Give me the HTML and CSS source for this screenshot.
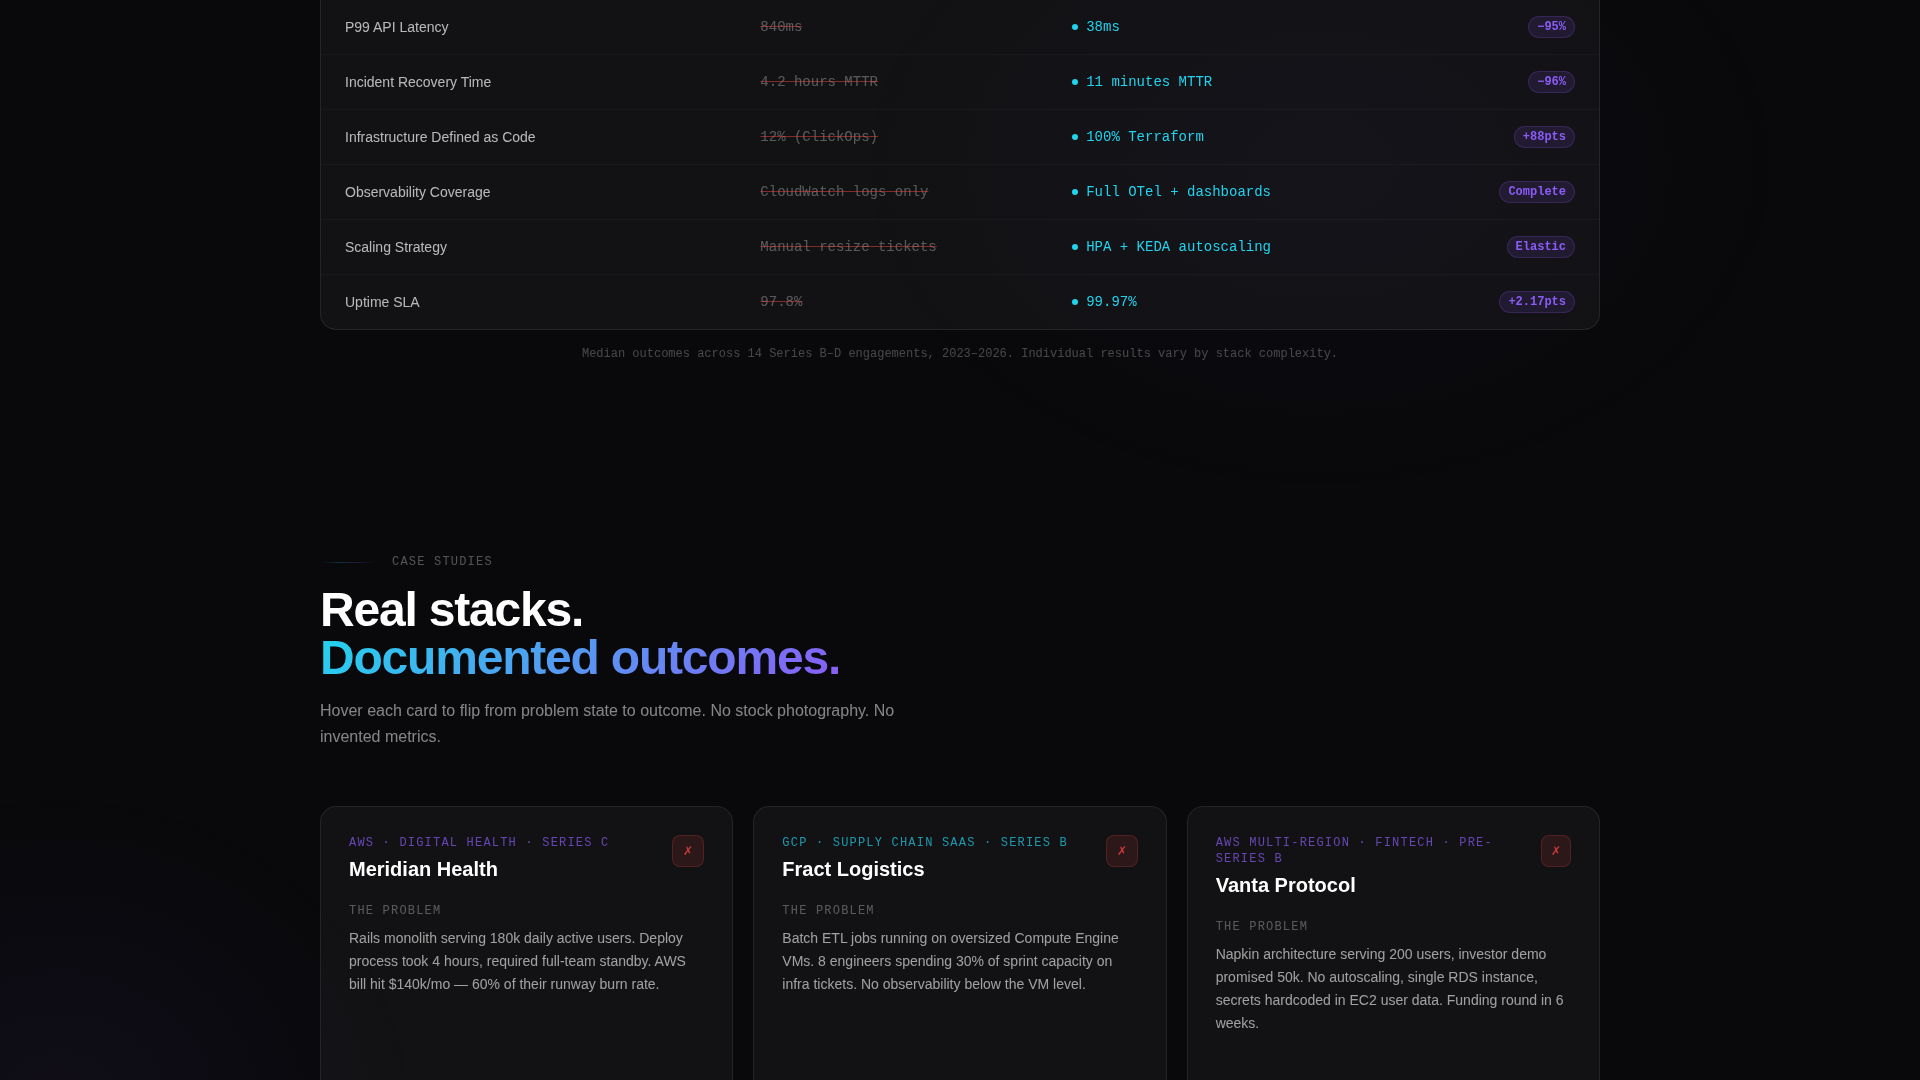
FILE: index.html
```html
<!DOCTYPE html>
<html lang="en">
<head>
    <meta charset="UTF-8">
    <meta name="viewport" content="width=device-width, initial-scale=1.0">
    <title>Case Studies</title>
    <link rel="stylesheet" href="styles.css">
</head>
<body>
    <div class="glow glow-top"></div>
    <div class="glow glow-bottom"></div>

    <main class="container">
        <section class="results">
            <div class="table-card">
                <table>
                    <colgroup>
                        <col class="col-metric">
                        <col class="col-before">
                        <col class="col-after">
                        <col class="col-delta">
                    </colgroup>
                    <tbody>
                        <tr>
                            <th scope="row">P99 API Latency</th>
                            <td class="before">840ms</td>
                            <td class="after"><span>38ms</span></td>
                            <td class="delta"><span class="badge">−95%</span></td>
                        </tr>
                        <tr>
                            <th scope="row">Incident Recovery Time</th>
                            <td class="before">4.2 hours MTTR</td>
                            <td class="after"><span>11 minutes MTTR</span></td>
                            <td class="delta"><span class="badge">−96%</span></td>
                        </tr>
                        <tr>
                            <th scope="row">Infrastructure Defined as Code</th>
                            <td class="before">12% (ClickOps)</td>
                            <td class="after"><span>100% Terraform</span></td>
                            <td class="delta"><span class="badge">+88pts</span></td>
                        </tr>
                        <tr>
                            <th scope="row">Observability Coverage</th>
                            <td class="before">CloudWatch logs only</td>
                            <td class="after"><span>Full OTel + dashboards</span></td>
                            <td class="delta"><span class="badge">Complete</span></td>
                        </tr>
                        <tr>
                            <th scope="row">Scaling Strategy</th>
                            <td class="before">Manual resize tickets</td>
                            <td class="after"><span>HPA + KEDA autoscaling</span></td>
                            <td class="delta"><span class="badge">Elastic</span></td>
                        </tr>
                        <tr>
                            <th scope="row">Uptime SLA</th>
                            <td class="before">97.8%</td>
                            <td class="after"><span>99.97%</span></td>
                            <td class="delta"><span class="badge">+2.17pts</span></td>
                        </tr>
                    </tbody>
                </table>
            </div>
            <p class="footnote">Median outcomes across 14 Series B–D engagements, 2023–2026. Individual results vary by stack complexity.</p>
        </section>

        <section class="cases">
            <div class="eyebrow">Case Studies</div>
            <h2>Real stacks.<br><span class="gradient">Documented outcomes.</span></h2>
            <p class="intro">Hover each card to flip from problem state to outcome. No stock photography. No invented metrics.</p>

            <div class="cards">
                <article class="card">
                    <header class="card-head">
                        <div>
                            <p class="label violet">AWS · Digital Health · Series C</p>
                            <h3>Meridian Health</h3>
                        </div>
                        <div class="mark">✗</div>
                    </header>
                    <p class="label">The Problem</p>
                    <p class="problem">Rails monolith serving 180k daily active users. Deploy process took 4 hours, required full-team standby. AWS bill hit $140k/mo — 60% of their runway burn rate.</p>
                </article>

                <article class="card">
                    <header class="card-head">
                        <div>
                            <p class="label cyan">GCP · Supply Chain SaaS · Series B</p>
                            <h3>Fract Logistics</h3>
                        </div>
                        <div class="mark">✗</div>
                    </header>
                    <p class="label">The Problem</p>
                    <p class="problem">Batch ETL jobs running on oversized Compute Engine VMs. 8 engineers spending 30% of sprint capacity on infra tickets. No observability below the VM level.</p>
                </article>

                <article class="card">
                    <header class="card-head">
                        <div>
                            <p class="label violet">AWS Multi-Region · Fintech · Pre-Series B</p>
                            <h3>Vanta Protocol</h3>
                        </div>
                        <div class="mark">✗</div>
                    </header>
                    <p class="label">The Problem</p>
                    <p class="problem">Napkin architecture serving 200 users, investor demo promised 50k. No autoscaling, single RDS instance, secrets hardcoded in EC2 user data. Funding round in 6 weeks.</p>
                </article>
            </div>
        </section>
    </main>
</body>
</html>
```
FILE: styles.css
```css
* {
    box-sizing: border-box;
    margin: 0;
    padding: 0;
}
body {
    font-family: "Liberation Sans", Arial, sans-serif;
    background: #09090b;
    color: #fff;
}

/* Background glows */
.glow {
    position: fixed;
    z-index: -1;
    border-radius: 50%;
}
.glow-top {
    top: -175px;
    right: 120px;
    width: 960px;
    height: 680px;
    background: radial-gradient(closest-side, rgba(139, 92, 246, 0.03), transparent);
}
.glow-bottom {
    bottom: -350px;
    left: -300px;
    width: 720px;
    height: 640px;
    background: radial-gradient(closest-side, rgba(139, 92, 246, 0.06), transparent);
}

.container {
    max-width: 1280px;
    margin: 0 auto;
}

/* Results table */
.table-card {
    border: 1px solid rgba(255, 255, 255, 0.08);
    border-top: none;
    border-radius: 0 0 16px 16px;
    background: rgba(255, 255, 255, 0.04);
}
table {
    width: 100%;
    table-layout: fixed;
    border-collapse: separate;
    border-spacing: 0;
}
.col-metric { width: 32.5%; }
.col-before { width: 24.4%; }
.col-after { width: 24.4%; }
th, td {
    padding: 16px 24px;
    border-bottom: 1px solid rgba(255, 255, 255, 0.03);
    font-size: 14px;
    font-weight: normal;
    line-height: 22px;
    text-align: left;
    white-space: nowrap;
}
tr:last-child th, tr:last-child td {
    border-bottom: none;
}
th {
    color: rgba(255, 255, 255, 0.7);
}
td {
    font-family: "Liberation Mono", monospace;
}
.before {
    color: rgba(255, 255, 255, 0.3);
    text-decoration: line-through;
    text-decoration-color: rgba(239, 68, 68, 0.5);
}
.after {
    color: #22d3ee;
}
.after span {
    display: flex;
    align-items: center;
    gap: 8px;
}
.after span::before {
    content: "";
    width: 6px;
    height: 6px;
    border-radius: 50%;
    background: #22d3ee;
}
.delta span {
    display: block;
    width: fit-content;
    margin-left: auto;
}
.badge {
    padding: 3px 8px;
    border: 1px solid rgba(139, 92, 246, 0.2);
    border-radius: 11px;
    background: rgba(139, 92, 246, 0.12);
    color: #8b5cf6;
    font-size: 12px;
    font-weight: bold;
    line-height: 14px;
}
.footnote {
    margin-top: 16px;
    color: rgba(255, 255, 255, 0.25);
    font-family: "Liberation Mono", monospace;
    font-size: 12px;
    line-height: 16px;
    text-align: center;
}

/* Case studies */
.cases {
    padding-top: 192px;
}
.eyebrow {
    display: flex;
    align-items: center;
    gap: 16px;
    color: rgba(255, 255, 255, 0.3);
    font-family: "Liberation Mono", monospace;
    font-size: 12px;
    line-height: 16px;
    letter-spacing: 0.1em;
    text-transform: uppercase;
}
.eyebrow::before {
    content: "";
    width: 56px;
    height: 1px;
    background: linear-gradient(90deg, transparent, rgba(34, 211, 238, 0.2), rgba(139, 92, 246, 0.2), transparent);
}
h2 {
    margin-top: 16px;
    font-size: 48px;
    line-height: 48px;
    letter-spacing: -0.025em;
}
.gradient {
    background: linear-gradient(135deg, #22d3ee, #8b5cf6);
    -webkit-background-clip: text;
    background-clip: text;
    color: transparent;
}
.intro {
    max-width: 576px;
    margin-top: 16px;
    color: rgba(255, 255, 255, 0.5);
    font-size: 16px;
    line-height: 26px;
}
.cards {
    display: grid;
    grid-template-columns: repeat(3, 1fr);
    gap: 20px;
    margin-top: 56px;
}
.card {
    min-height: 340px;
    padding: 28px;
    border: 1px solid rgba(255, 255, 255, 0.08);
    border-radius: 16px;
    background: rgba(255, 255, 255, 0.04);
}
.card-head {
    display: flex;
    justify-content: space-between;
    align-items: flex-start;
    margin-bottom: 20px;
}
.label {
    color: rgba(255, 255, 255, 0.3);
    font-family: "Liberation Mono", monospace;
    font-size: 12px;
    line-height: 16px;
    letter-spacing: 0.1em;
    text-transform: uppercase;
}
.label.violet { color: rgba(139, 92, 246, 0.7); }
.label.cyan { color: rgba(34, 211, 238, 0.7); }
h3 {
    margin-top: 4px;
    font-size: 20px;
    line-height: 28px;
}
.mark {
    display: flex;
    align-items: center;
    justify-content: center;
    width: 32px;
    height: 32px;
    border: 1px solid rgba(239, 68, 68, 0.2);
    border-radius: 8px;
    background: rgba(239, 68, 68, 0.12);
    color: rgba(239, 68, 68, 0.8);
    font-size: 12px;
}
.problem {
    margin-top: 8px;
    color: rgba(255, 255, 255, 0.6);
    font-size: 14px;
    line-height: 23px;
}
```
